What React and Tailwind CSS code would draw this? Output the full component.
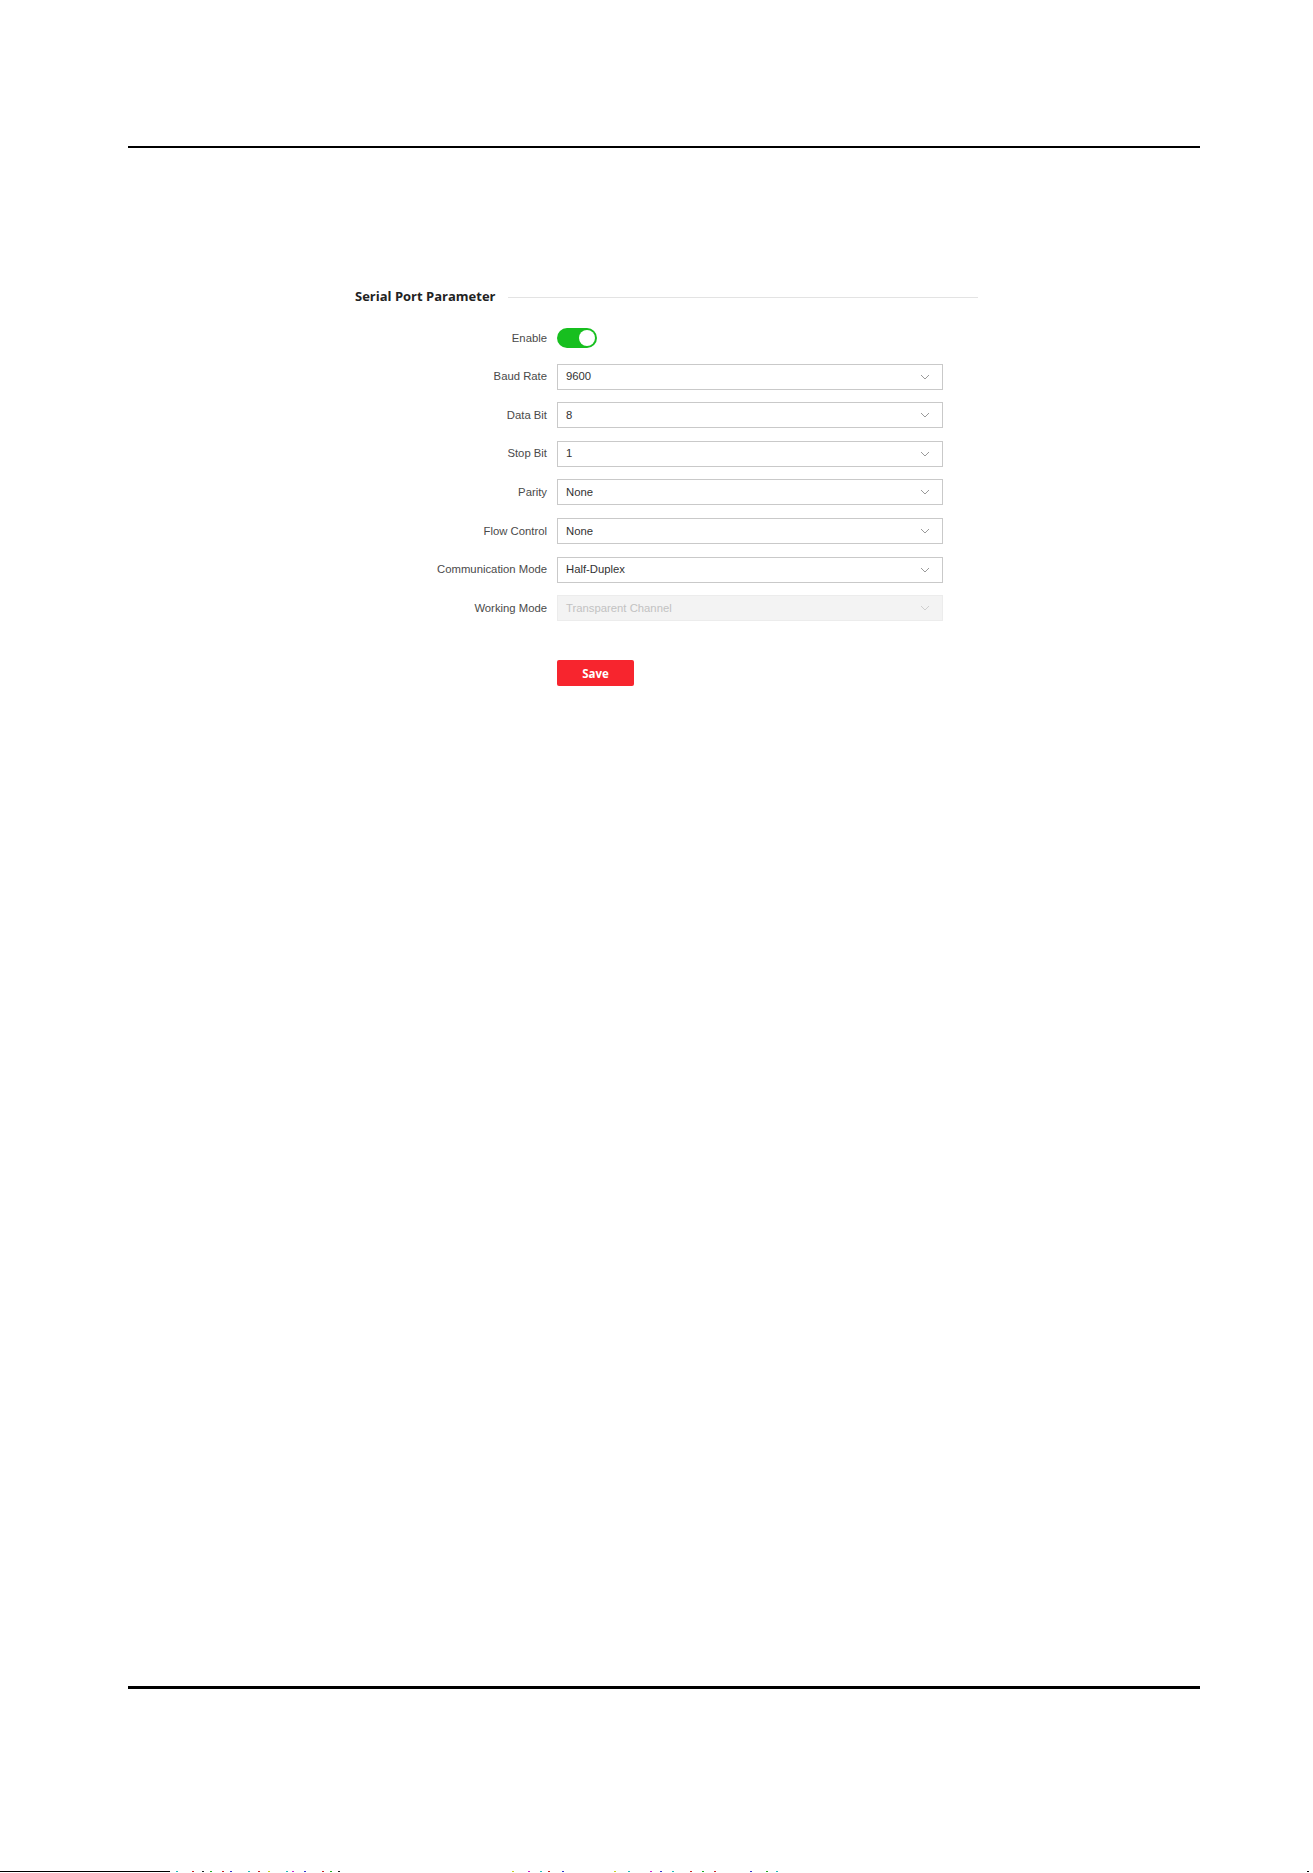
import React from 'react';

const fields = [
    { label: 'Baud Rate', value: '9600' },
    { label: 'Data Bit', value: '8' },
    { label: 'Stop Bit', value: '1' },
    { label: 'Parity', value: 'None' },
    { label: 'Flow Control', value: 'None' },
    { label: 'Communication Mode', value: 'Half-Duplex' },
    { label: 'Working Mode', value: 'Transparent Channel', disabled: true },
];

// scan noise along the very bottom edge of the page
const noise = [
    [176, '#2bb'], [192, '#c22'], [202, '#222'], [210, '#2a2'], [222, '#c22'], [230, '#33c'], [248, '#2bb'],
    [258, '#c22'], [268, '#cc2'], [286, '#2bb'], [292, '#c2c'], [304, '#33c'], [322, '#c22'], [330, '#2a2'],
    [338, '#222'], [512, '#cc2'], [528, '#c2c'], [540, '#2bb'], [548, '#c22'], [562, '#33c'], [614, '#cc2'],
    [628, '#2bb'], [650, '#c2c'], [660, '#33c'], [672, '#2bb'], [690, '#c22'], [702, '#2a2'], [714, '#c22'],
    [750, '#33c'], [766, '#2a2'], [776, '#2bb'],
];

function Chevron({ muted }) {
    return (
        <svg width="10" height="6" viewBox="0 0 10 6" fill="none">
            <path d="M1 1l4 4 4-4" stroke={muted ? '#cfcfcf' : '#9a9a9a'} strokeWidth="1" />
        </svg>
    );
}

function SelectBox({ value, disabled }) {
    return (
        <div
            className={`flex items-center justify-between w-[386px] h-[26px] pl-[8px] pr-[12px] border text-[11.3px] ${
                disabled
                    ? 'bg-[#f3f3f3] border-[#ececec] text-[#c2c2c2]'
                    : 'bg-white border-[#c9c9c9] text-[#333333]'
            }`}
        >
            <span>{value}</span>
            <Chevron muted={disabled} />
        </div>
    );
}

function Row({ label, children }) {
    return (
        <div className="flex items-center h-[26px]">
            <div className="w-[202px] pr-[10px] text-right text-[11.3px] text-[#4a4a4a]">{label}</div>
            {children}
        </div>
    );
}

export default function App() {
    return (
        <div className="relative w-[1313px] h-[1873px] overflow-hidden bg-white font-['Liberation_Sans',Arial,sans-serif]">
            <div className="pt-[146px] pl-[128px]">
                <div className="w-[1072px] h-[2px] bg-black" />
            </div>

            <div className="ml-[355px] mt-[139px] w-[623px]">
                <div className="flex items-center h-[20px] gap-[12px]">
                    <span className="text-[13px] font-bold text-[#222222] font-['Open_Sans',sans-serif]">
                        Serial Port Parameter
                    </span>
                    <div className="flex-1 h-px bg-[#e3e3e3]" />
                </div>

                <div className="mt-[18px] flex flex-col gap-[12.6px]">
                    <Row label="Enable">
                        <div className="flex items-center justify-end w-[40px] h-[20px] rounded-full bg-[#17bf1f] pr-[2px]">
                            <div className="w-[16px] h-[16px] rounded-full bg-white" />
                        </div>
                    </Row>
                    {fields.map((f) => (
                        <Row key={f.label} label={f.label}>
                            <SelectBox value={f.value} disabled={f.disabled} />
                        </Row>
                    ))}
                </div>

                <div className="mt-[39px] ml-[202px]">
                    <button className="w-[77px] h-[26px] rounded-[2px] bg-[#f7252e] text-white text-[11.5px] font-bold font-['Open_Sans',sans-serif]">
                        Save
                    </button>
                </div>
            </div>

            <div className="mt-[1000px] pl-[128px]">
                <div className="w-[1072px] h-[3px] bg-black" />
            </div>

            {/* bottom edge */}
            <div className="absolute left-0 bottom-[1px] w-full h-[1px]">
                <div className="absolute left-0 top-0 w-[170px] h-[1px] bg-black" />
                {noise.map(([x, c]) => (
                    <div key={x} className="absolute top-0 w-[2px] h-[1px]" style={{ left: x, background: c }} />
                ))}
                <div className="absolute right-[4px] top-0 w-[2px] h-[1px] bg-black" />
            </div>
        </div>
    );
}
